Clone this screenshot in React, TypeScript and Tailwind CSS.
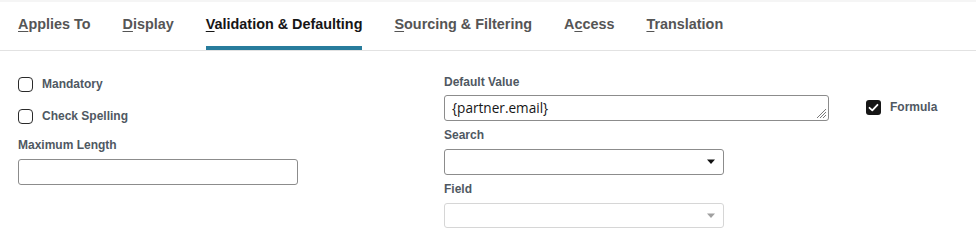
import React from "react";

const font = { fontFamily: '"Liberation Sans", Arial, sans-serif' };

function Tab({ pre, u, post, active }: { pre?: string; u: string; post: string; active?: boolean }) {
  return (
    <div className="flex flex-col">
      <span
        className={`flex-1 flex items-center text-[14.4px] font-bold leading-[18px] ${active ? "text-[#161616]" : "text-[#555555]"}`}
      >
        <span>
          {pre}
          <span className="underline underline-offset-[2px]">{u}</span>
          {post}
        </span>
      </span>
      <div className={`h-[4px] ${active ? "bg-[#287c9c]" : "bg-transparent"}`} />
    </div>
  );
}

function Checkbox({ label, checked }: { label: string; checked?: boolean }) {
  return (
    <div className="flex items-center h-[20px] gap-[9px]">
      {checked ? (
        <div className="w-[15px] h-[15px] rounded-[3px] bg-[#161616] flex items-center justify-center">
          <svg width="11" height="11" viewBox="0 0 11 11">
            <path d="M1.5 5.8 L4.3 8.4 L9.5 2.8" fill="none" stroke="#ffffff" strokeWidth="1.8" strokeLinecap="round" strokeLinejoin="round" />
          </svg>
        </div>
      ) : (
        <div className="w-[15px] h-[15px] rounded-[4px] border-[1.5px] border-[#2a2a2a] bg-white" />
      )}
      <span className="text-[12px] font-bold leading-[14px] text-[#4f5862]">{label}</span>
    </div>
  );
}

function Label({ children, className = "" }: { children: React.ReactNode; className?: string }) {
  return <div className={`text-[12px] font-bold leading-[14px] text-[#4f5862] ${className}`}>{children}</div>;
}

function Select({ disabled, className = "" }: { disabled?: boolean; className?: string }) {
  return (
    <div
      className={`w-[280px] rounded-[3px] border bg-white flex items-center justify-end pr-[7px] ${
        disabled ? "border-[#d6d6d6]" : "border-[#8c8c8c]"
      } ${className}`}
    >
      <svg width="10" height="6" viewBox="0 0 10 6">
        <path d="M1 0.5 L9 0.5 L5 5 Z" fill={disabled ? "#a0a0a0" : "#111111"} />
      </svg>
    </div>
  );
}

export default function App() {
  return (
    <div className="w-[976px] h-[243px] bg-white overflow-hidden" style={font}>
      <div className="h-[2px] bg-[#f5f5f5]" />
      <div className="h-[49px] border-b border-[#e2e2e2] flex gap-8 pl-[18px]">
        <Tab u="A" post="pplies To" />
        <Tab u="D" post="isplay" />
        <Tab u="V" post="alidation & Defaulting" active />
        <Tab u="S" post="ourcing & Filtering" />
        <Tab pre="A" u="c" post="cess" />
        <Tab u="T" post="ranslation" />
      </div>
      <div className="flex">
        <div className="pl-[18px] pt-[23px] w-[444px] flex flex-col">
          <Checkbox label="Mandatory" />
          <div className="mt-[12px]">
            <Checkbox label="Check Spelling" />
          </div>
          <Label className="mt-[12px]">Maximum Length</Label>
          <div className="mt-[7px] w-[280px] h-[26px] rounded-[3px] border border-[#8c8c8c] bg-white" />
        </div>
        <div className="pt-[24px] flex flex-col">
          <Label>Default Value</Label>
          <div className="mt-[6px] flex items-start">
            <div className="relative w-[385px] h-[26px] rounded-[3px] border border-[#8c8c8c] bg-white flex items-center pl-[7px]">
              <span className="text-[#161616] leading-[18px]" style={{ fontFamily: '"Open Sans", "Liberation Sans", sans-serif', fontSize: "13.6px" }}>
                {"{partner.email}"}
              </span>
              <svg className="absolute right-[1px] bottom-[1px]" width="11" height="11" viewBox="0 0 11 11">
                <path d="M10 1 L1 10 M10 4 L4 10 M10 7 L7 10" stroke="#7a7a7a" strokeWidth="1" />
              </svg>
            </div>
            <div className="ml-[37px] mt-[2px]">
              <Checkbox label="Formula" checked />
            </div>
          </div>
          <Label className="mt-[7px]">Search</Label>
          <Select className="mt-[7px] h-[26px]" />
          <Label className="mt-[7px]">Field</Label>
          <Select className="mt-[7px] h-[25px]" disabled />
        </div>
      </div>
    </div>
  );
}
